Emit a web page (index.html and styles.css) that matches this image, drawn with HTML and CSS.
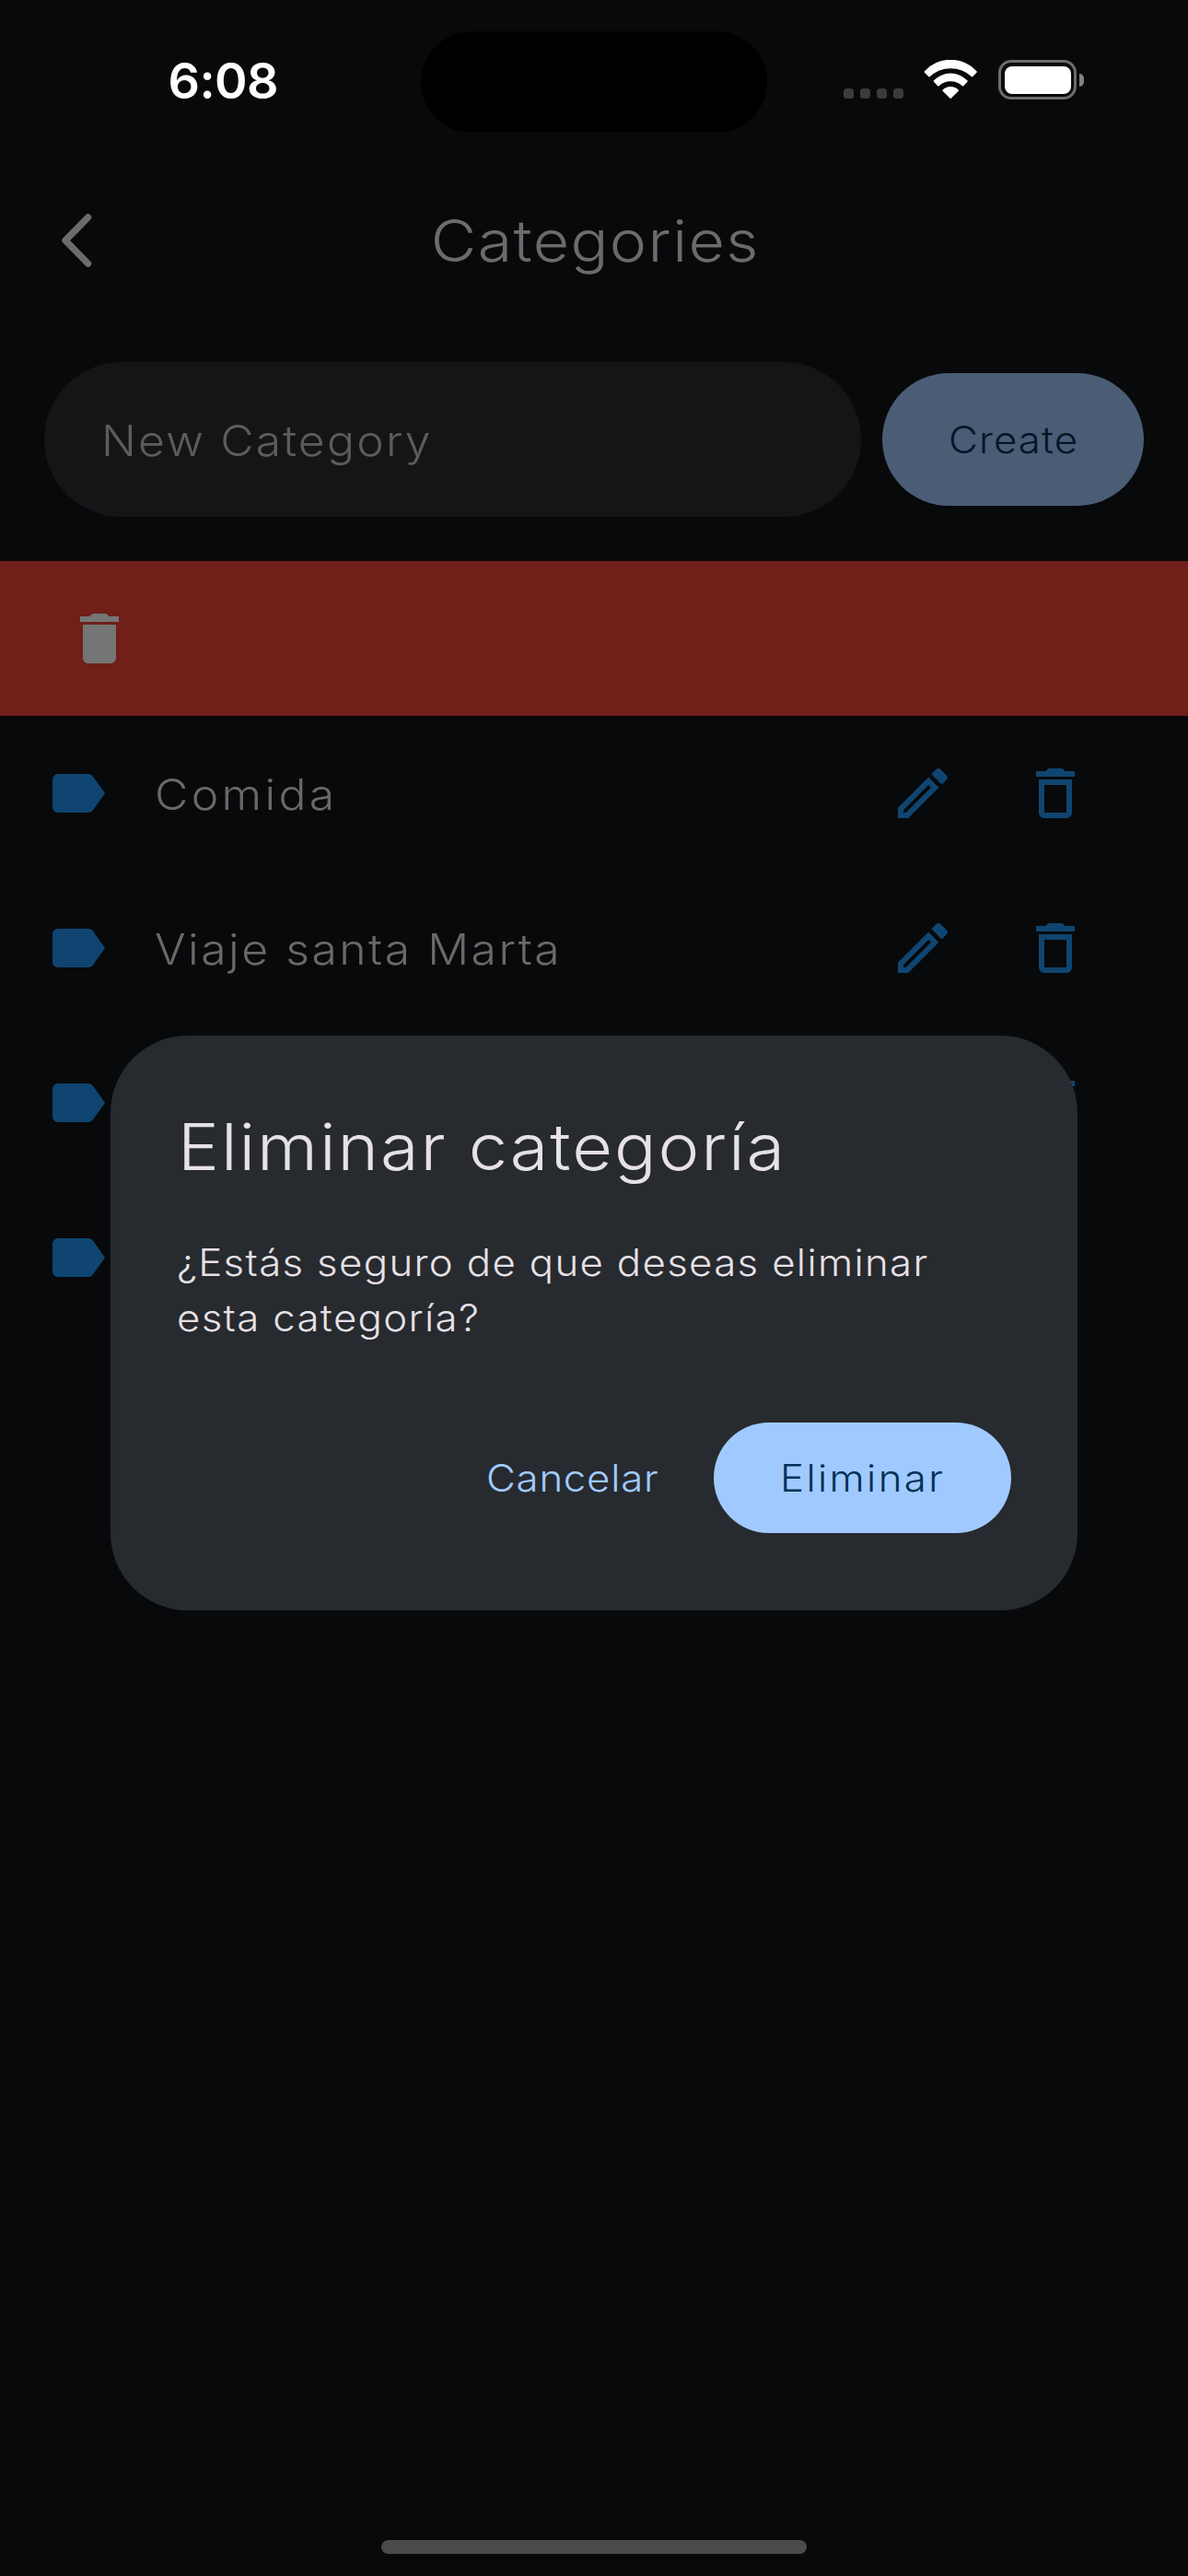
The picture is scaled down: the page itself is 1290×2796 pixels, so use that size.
FILE: index.html
```
<!DOCTYPE html>
<html lang="es">
<head>
<meta charset="utf-8">
<title>Categories</title>
<link rel="stylesheet" href="styles.css">
</head>
<body>
<svg class="defs" aria-hidden="true">
  <symbol id="label" viewBox="0 0 24 24"><path d="M17.63 5.84C17.27 5.33 16.67 5 16 5L5 5.01C3.9 5.01 3 5.9 3 7v10c0 1.1.9 1.99 2 1.99L16 19c.67 0 1.27-.33 1.63-.84L22 12l-4.37-6.16z"/></symbol>
  <symbol id="edit" viewBox="0 0 24 24"><path d="M14.06 9.02l.92.92L5.92 19H5v-.92l9.06-9.06M17.66 3c-.25 0-.51.1-.7.29l-1.83 1.83 3.75 3.75 1.83-1.83c.39-.39.39-1.02 0-1.41l-2.34-2.34c-.2-.2-.45-.29-.71-.29zm-3.6 3.19L3 17.25V21h3.75L17.81 9.94l-3.75-3.75z"/></symbol>
  <symbol id="trash-outline" viewBox="0 0 24 24"><path d="M6 19c0 1.1.9 2 2 2h8c1.1 0 2-.9 2-2V7H6v12zM8 9h8v10H8V9zm7.5-5l-.71-.71c-.18-.18-.44-.29-.7-.29H9.910c-.26 0-.52.11-.7.29L8.500 4H5v2h14V4h-3.500z"/></symbol>
  <symbol id="trash" viewBox="0 0 24 24"><path d="M6 19c0 1.1.9 2 2 2h8c1.1 0 2-.9 2-2V7H6v12zM19 4h-3.500l-.71-.71c-.18-.18-.44-.29-.7-.29H9.910c-.26 0-.52.11-.7.29L8.500 4H5v2h14V4z"/></symbol>
</svg>

<div class="screen">
  <div class="status">
    <div class="time">6:08</div>
    <div class="island"></div>
    <div class="indicators">
      <div class="cell"><i></i><i></i><i></i><i></i></div>
      <svg class="wifi" viewBox="0 0 58 43">
        <path d="M.7 12.4A38.5 38.5 0 0 1 57.7 12.4Q58 13.2 57.5 13.7L53 18.2Q52.5 18.6 52 18.2A33.5 33.5 0 0 0 6.5 18.2Q6 18.6 5.4 18.2L.9 13.7Q.4 13.1.7 12.4z"/>
        <path d="M10.8 22.6A25 25 0 0 1 47.6 22.6Q48 23.2 47.5 23.7L43 28.4Q42.4 28.8 41.8 28.3A18.3 18.3 0 0 0 16.6 28.3Q16 28.8 15.4 28.4L10.9 23.7Q10.4 23.2 10.8 22.6z"/>
        <path d="M20.5 32.7A12 12 0 0 1 37.9 32.7Q38.3 33.3 37.8 33.8L30 41.6Q29.2 42.2 28.4 41.6L20.6 33.8Q20.1 33.3 20.5 32.7z"/>
      </svg>
      <div class="battery"><div class="shell"><div class="charge"></div></div><div class="nub"></div></div>
    </div>
  </div>

  <header class="appbar">
    <svg class="back" viewBox="0 0 36 60"><path d="M29.5 5L5 30l24.500 25"/></svg>
    <h1><span class="wide">Categories</span></h1>
  </header>

  <div class="new">
    <div class="field"><span class="wide">New Category</span></div>
    <div class="btn create"><span class="wide">Create</span></div>
  </div>

  <div class="swiped"><svg class="icon"><use href="#trash"/></svg></div>

  <ul class="list">
    <li><svg class="icon"><use href="#label"/></svg><div class="name short"><span class="wide">Comida</span></div><svg class="icon"><use href="#edit"/></svg><svg class="icon"><use href="#trash-outline"/></svg></li>
    <li><svg class="icon"><use href="#label"/></svg><div class="name"><span class="wide">Viaje santa Marta</span></div><svg class="icon"><use href="#edit"/></svg><svg class="icon"><use href="#trash-outline"/></svg></li>
    <li><svg class="icon"><use href="#label"/></svg><div class="name"></div><svg class="icon"><use href="#edit"/></svg><svg class="icon"><use href="#trash-outline"/></svg></li>
    <li><svg class="icon"><use href="#label"/></svg><div class="name"></div><svg class="icon"><use href="#edit"/></svg><svg class="icon"><use href="#trash-outline"/></svg></li>
  </ul>

  <div class="home"></div>

  <div class="overlay">
    <div class="dialog">
      <h2><span class="wide">Eliminar categoría</span></h2>
      <p><span class="wide">¿Estás seguro de que deseas eliminar<br>esta categoría?</span></p>
      <div class="actions">
        <div class="btn cancel"><span class="wide">Cancelar</span></div>
        <div class="btn confirm"><span class="wide">Eliminar</span></div>
      </div>
    </div>
  </div>
</div>
</body>
</html>
```
FILE: styles.css
```
* { box-sizing: border-box; margin: 0; padding: 0; }

body {
  background: #07090b;
  font-family: Inter, "Open Sans", sans-serif;
  font-weight: 300;
}

.defs { position: absolute; width: 0; height: 0; }

.screen {
  position: relative;
  display: flex;
  flex-direction: column;
  width: 1290px;
  height: 2796px;
  overflow: hidden;
}

.icon { width: 72px; height: 72px; flex: none; fill: currentColor; }

/* geometric, slightly extended letterforms */
.wide { display: inline-block; white-space: nowrap; transform: scaleX(1.08); transform-origin: 0 50%; }

/* status bar */
.status {
  display: grid;
  grid-template-columns: 457px 376px 1fr;
  height: 177px;
  padding-top: 34px;
  align-items: start;
}
.time {
  padding: 21px 0 0 182.5px;
  color: #fff;
  font-size: 54px;
  line-height: 66px;
  font-weight: 600;
  letter-spacing: -0.6px;
}
.island { height: 110px; border-radius: 55px; background: #000; }
.indicators { display: flex; padding: 31px 0 0 83px; }
.cell { display: flex; gap: 7px; padding-top: 31px; margin-right: 22px; }
.cell i { width: 11px; height: 11px; border-radius: 3.5px; background: #3a3b3c; }
.wifi { width: 58px; height: 43px; margin: 0 23px 0 0; fill: #fff; }
.battery { display: flex; align-items: center; gap: 3px; height: 43px; }
.shell { width: 85px; height: 43px; padding: 3.5px; border: 3.5px solid #6b6c6d; border-radius: 14px; }
.charge { height: 100%; border-radius: 8px; background: #fff; }
.nub { width: 5px; height: 14px; border-radius: 0 5px 5px 0; background: #7f8081; }

/* app bar */
.appbar {
  display: grid;
  grid-template-columns: 170px 1fr 170px;
  align-items: center;
  height: 168px;
  color: #6a6b6c;
}
.back { width: 36px; height: 60px; margin-left: 66px; fill: none; stroke: currentColor; stroke-width: 7.5; stroke-linecap: round; stroke-linejoin: round; }
h1 {
  padding-left: 2px;
  font-size: 63px;
  line-height: 80px;
  font-weight: 300;
  letter-spacing: 1.3px;
  text-align: center;
}
h1 .wide { transform-origin: 50% 50%; }

/* new category form */
.new { display: flex; align-items: center; gap: 23px; height: 168px; margin: 48px; }
.field {
  width: 887px;
  height: 168px;
  padding: 1px 0 0 61.5px;
  border-radius: 84px;
  background: #131517;
  color: #5b5c5d;
  font-size: 46.2px;
  line-height: 168px;
  letter-spacing: 2px;
}
.btn { flex: none; border-radius: 72px; font-size: 40.5px; white-space: nowrap; }
.create {
  width: 284px;
  height: 144px;
  padding-left: 72px;
  background: #4a5d75;
  color: #001729;
  line-height: 146px;
  letter-spacing: 1px;
}

/* list */
.swiped { display: flex; align-items: center; height: 168px; padding-left: 72px; background: #701f19; color: #757575; }
.list { flex: 1; list-style: none; color: #0f4570; }
.list li { display: flex; align-items: center; gap: 72px; height: 168px; padding: 0 108px 0 48px; }
.name {
  flex: 1;
  margin-left: -24px;
  padding-top: 2px;
  color: #68696a;
  font-size: 46.2px;
  line-height: 60px;
  letter-spacing: 2.3px;
}
.name.short { letter-spacing: 3.1px; }

.home { width: 462px; height: 15px; margin: 0 auto 24px; border-radius: 8px; background: #4b4b4b; }

/* dialog */
.overlay {
  position: absolute;
  inset: 177px 0 102px;
  display: flex;
  align-items: center;
  justify-content: center;
}
.dialog {
  width: 1050px;
  height: 624px;
  padding: 72px;
  border-radius: 84px;
  background: #272a2f;
  color: #e6e1e6;
}
h2 {
  padding: 1px 0 0 1px;
  height: 96px;
  font-size: 70px;
  line-height: 96px;
  font-weight: 300;
  letter-spacing: 1.8px;
}
.dialog p { margin-top: 48px; padding-top: 1px; height: 120px; font-size: 40.5px; line-height: 60px; letter-spacing: 1.24px; }
.actions { display: flex; justify-content: flex-end; gap: 24px; margin-top: 84px; line-height: 121px; }
.cancel { width: 260px; padding-left: 36.5px; color: #a0caff; letter-spacing: 0.7px; }
.confirm { width: 323px; height: 120px; padding-left: 72px; background: #a0caff; color: #003259; letter-spacing: 2.2px; }
```
